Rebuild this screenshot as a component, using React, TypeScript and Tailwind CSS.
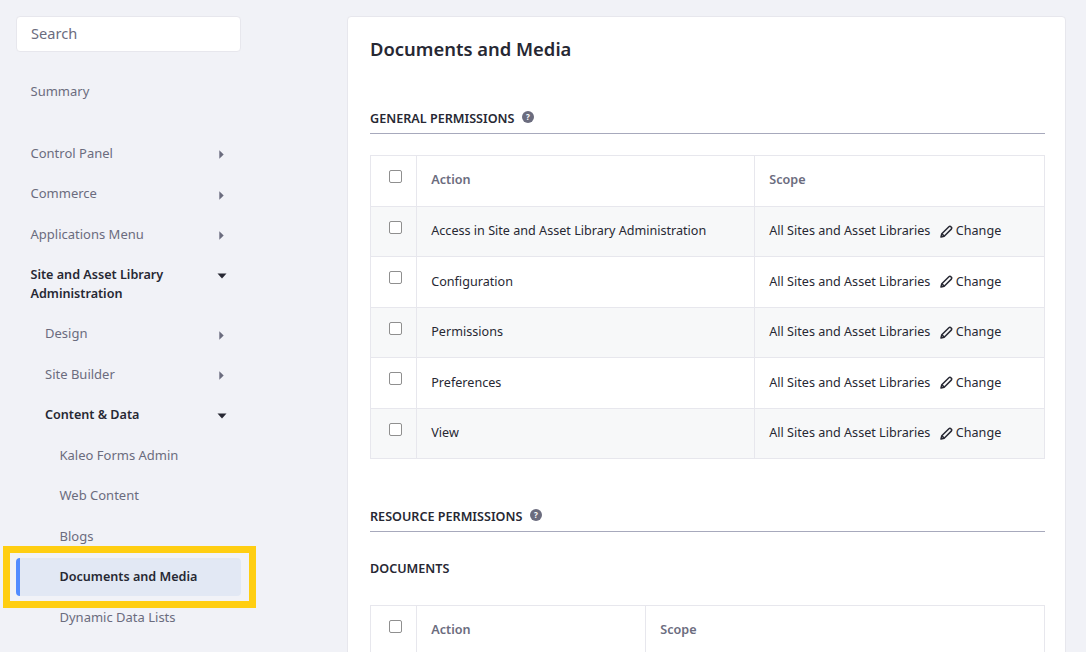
import React from "react";

const Caret = ({ open }: { open?: boolean }) =>
  open ? (
    <svg width="10" height="6" viewBox="0 0 10 6" className="fill-[#272833]"><path d="M0.5 0.5h9L5 5.5z" /></svg>
  ) : (
    <svg width="5" height="9" viewBox="0 0 5 9" className="fill-[#6b6c7e] mr-[3px]"><path d="M0.3 0.3L4.7 4.5L0.3 8.7z" /></svg>
  );

type Item = { label: string; indent?: 0 | 1 | 2; bold?: boolean; caret?: "right" | "down"; };

const items: Item[] = [
  { label: "Control Panel", caret: "right" },
  { label: "Commerce", caret: "right" },
  { label: "Applications Menu", caret: "right" },
  { label: "Site and Asset Library Administration", bold: true, caret: "down" },
  { label: "Design", indent: 1, caret: "right" },
  { label: "Site Builder", indent: 1, caret: "right" },
  { label: "Content & Data", indent: 1, bold: true, caret: "down" },
  { label: "Kaleo Forms Admin", indent: 2 },
  { label: "Web Content", indent: 2 },
  { label: "Blogs", indent: 2 },
];

const Row = ({ item }: { item: Item }) => (
  <div
    className={`flex items-start justify-between py-[10.725px] pr-[14px] leading-[19px] ${
      item.indent === 2 ? "pl-[43.5px]" : item.indent === 1 ? "pl-[29px]" : "pl-[14.5px]"
    } ${item.bold ? "text-[12.6px] font-semibold text-[#272833]" : "text-[13px] text-[#6b6c7e]"}`}
  >
    <span className={item.label.length > 30 ? "w-[150px]" : ""}>{item.label}</span>
    {item.caret && (
      <span className="h-[16px] mt-[3px] flex items-center">
        <Caret open={item.caret === "down"} />
      </span>
    )}
  </div>
);

const Check = () => (
  <span className="block w-[13px] h-[13px] rounded-[2px] border border-[#8f8f8f] bg-white ml-[18px]" />
);

const Pencil = () => (
  <svg width="13" height="13" viewBox="0 0 13 13" fill="none" stroke="#272833" strokeWidth="1.5" strokeLinejoin="round">
    <path d="M1 12l.8-3.2L8.9 1.7c.6-.6 1.5-.6 2 0l.4.4c.6.6.6 1.4 0 2L4.2 11.2z" />
    <path d="M1.9 8.8l2.3 2.3" />
  </svg>
);

const Help = () => (
  <span className="inline-flex items-center justify-center w-[12px] h-[12px] rounded-full bg-[#6b6c7e] text-white text-[8px] font-bold leading-none">?</span>
);

const rows = ["Access in Site and Asset Library Administration", "Configuration", "Permissions", "Preferences", "View"];

const SectionTitle = ({ children }: { children: string }) => (
  <div className="flex items-center gap-[7.5px] text-[12.6px] font-semibold text-[#272833] border-b border-[#a7a9bc] h-[30px] pt-[2px] uppercase">
    <span>{children}</span>
    <span className="-mt-[5px] flex"><Help /></span>
  </div>
);

const Head = () => (
  <tr className="h-[50.5px]">
    <th className="border border-[#e7e7ed] pb-[9px]"><Check /></th>
    <th className="border border-[#e7e7ed] px-[14.25px] text-left font-semibold text-[#6b6c7e]">Action</th>
    <th className="border border-[#e7e7ed] px-[14.25px] text-left font-semibold text-[#6b6c7e]">Scope</th>
  </tr>
);

export default function App() {
  return (
    <div className="relative h-[652px] overflow-hidden bg-[#f1f2f7] flex items-start font-['Noto_Sans',sans-serif]">
      <aside className="w-[225px] ml-[16px] mt-[16px] shrink-0">
        <div className="h-[36px] rounded-[4px] bg-white border border-[#e7e7ed] px-[14px] pb-[1px] flex items-center text-[14.6px] text-[#6b6c7e]">Search</div>
        <div className="mt-[19px] h-[61.925px]">
          <Row item={{ label: "Summary" }} />
        </div>
        <div>
          {items.map((i) => (
            <Row key={i.label} item={i} />
          ))}
          <div className="mt-[2px] mb-[0.9px] h-[38px] rounded-[4px] bg-[#e2e8f4] border-l-[4px] border-[#528cff] pl-[39.5px] flex items-center text-[12.6px] font-semibold text-[#272833]">
            Documents and Media
          </div>
          <Row item={{ label: "Dynamic Data Lists", indent: 2 }} />
        </div>
      </aside>

      <main className="ml-[106px] mt-[16px] w-[719px] shrink-0 bg-white border border-[#e7e7ed] rounded-[4px] pl-[22px] pr-[20px] pt-[18px] h-[700px]">
        <h1 className="text-[18.4px] leading-[27px] font-semibold text-[#272833]">Documents and Media</h1>
        <div className="mt-[42px]"><SectionTitle>General Permissions</SectionTitle></div>

        <table className="mt-[21px] w-[675px] table-fixed border-collapse text-[12.6px] text-[#272833]">
          <colgroup>
            <col className="w-[46px]" />
            <col className="w-[338px]" />
            <col />
          </colgroup>
          <thead>
            <Head />
          </thead>
          <tbody>
            {rows.map((r) => (
              <tr key={r} className="h-[50.5px] bg-[#f7f8f9] even:bg-white">
                <td className="border border-[#e7e7ed] pb-[8.5px]"><Check /></td>
                <td className="border border-[#e7e7ed] px-[14.25px] pt-[0.5px]">{r}</td>
                <td className="border border-[#e7e7ed] px-[14.25px] pt-[0.5px]">
                  <span className="flex items-center">
                    <span>All Sites and Asset Libraries</span>
                    <span className="ml-[9.5px] mr-[3px] flex"><Pencil /></span>
                    <span>Change</span>
                  </span>
                </td>
              </tr>
            ))}
          </tbody>
        </table>

        <div className="mt-[43px]"><SectionTitle>Resource Permissions</SectionTitle></div>
        <div className="mt-[28px] text-[12.6px] leading-[18px] font-semibold text-[#272833]">DOCUMENTS</div>

        <table className="mt-[27px] w-[675px] table-fixed border-collapse text-[12.6px]">
          <colgroup>
            <col className="w-[46px]" />
            <col className="w-[229px]" />
            <col />
          </colgroup>
          <thead>
            <Head />
          </thead>
        </table>
      </main>

      <div className="absolute left-[3px] top-[546px] w-[253px] h-[62px] border-[7px] border-[#ffce12]" />
    </div>
  );
}
